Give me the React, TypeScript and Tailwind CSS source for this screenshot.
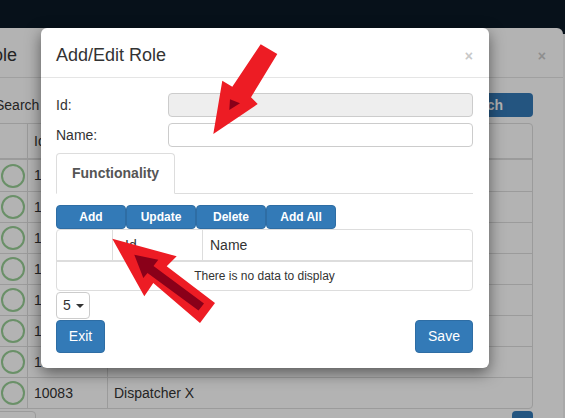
import React from "react";

const bgRows = ["1", "1", "1", "1", "1", "1", "1", "10083"];
const bgNames = ["", "", "", "", "", "", "", "Dispatcher X"];

function BgModal() {
  return (
    <div className="flex h-full pt-[28px]">
      <div className="ml-[-35px] w-[598px] shrink-0 h-full bg-[#b3b3b3] rounded-tr-[6px] flex flex-col text-[#242424]">
        <div className="h-[50px] shrink-0 border-b border-[#a0a0a0] flex items-start justify-between pt-[15px] pl-[15px] pr-[17px]">
          <div className="text-[18px] leading-[25.7px]">Role</div>
          <div className="text-[14px] font-bold leading-none mt-[6px] text-[#8e8e8e]">×</div>
        </div>
        <div className="pl-[15px] pr-[15px] flex flex-col">
          <div className="mt-[15px] flex items-center h-[24px]">
            <div className="ml-[15px] text-[14px]">Search</div>
            <div className="ml-auto mr-[15px] w-[88px] h-[24px] rounded-[4px] bg-[#245580] text-[#b3b3b3] text-[14px] font-bold flex items-center justify-end pr-[30px]">
              Search
            </div>
          </div>
          <div className="mt-[6px] ml-[15px] mr-[15px] border border-[#9b9b9b] rounded-[4px] text-[14px]">
            <div className="h-[36px] flex border-b-2 border-[#9b9b9b]">
              <div className="w-[32px] border-r border-[#9b9b9b]" />
              <div className="w-[80px] border-r border-[#9b9b9b] pl-[6px] flex items-center">Id</div>
              <div className="flex-1 pl-[6px] flex items-center">Name</div>
            </div>
            {bgRows.map((r, i) => (
              <div
                key={i}
                className={
                  i === 0
                    ? "h-[31px] flex"
                    : "h-[31px] flex border-t border-[#9b9b9b]"
                }
              >
                <div className="w-[32px] border-r border-[#9b9b9b] flex items-center pl-[5px]">
                  <div className="w-[24px] h-[24px] rounded-full border-2 border-[#6a9068]" />
                </div>
                <div className="w-[80px] border-r border-[#9b9b9b] pl-[6px] flex items-center">{r}</div>
                <div className="flex-1 pl-[6px] flex items-center">{bgNames[i]}</div>
              </div>
            ))}
          </div>
          <div className="mt-[2px] ml-[15px] mr-[15px] flex">
            <div className="w-[41px] h-[20px] border border-[#9b9b9b] rounded-t-[4px]" />
            <div className="ml-auto w-[21px] h-[20px] bg-[#245580] rounded-t-[4px]" />
          </div>
        </div>
      </div>
      <div className="flex-1 mt-[6px] bg-[#a9a9a9]" />
    </div>
  );
}

function BlueBtn({ children, w, h, size }: { children: React.ReactNode; w: string; h: string; size: string }) {
  return (
    <div
      className={`${w} ${h} ${size} bg-[#337ab7] border border-[#2e6da4] rounded-[4px] text-white flex items-center justify-center`}
    >
      {children}
    </div>
  );
}

function FgModal() {
  return (
    <div className="absolute left-[41px] top-[28px] w-[448px] h-[340px] bg-white rounded-[6px] shadow-[0_5px_15px_rgba(0,0,0,0.5)] text-[#333] flex flex-col">
      <div className="h-[50px] shrink-0 border-b border-[#e5e5e5] flex items-start justify-between pt-[15px] pl-[15px] pr-[16px]">
        <div className="text-[18px] leading-[25.7px]">Add/Edit Role</div>
        <div className="text-[14px] font-bold leading-none mt-[6px] text-[#c8c8c8]">×</div>
      </div>
      <div className="pl-[15px] pr-[16px] flex flex-col">
        <div className="mt-[15px] flex items-center h-[24px]">
          <div className="w-[112px] text-[14px]">Id:</div>
          <div className="flex-1 h-[24px] bg-[#eeeeee] border border-[#cccccc] rounded-[4px]" />
        </div>
        <div className="mt-[6px] flex items-center h-[24px]">
          <div className="w-[112px] text-[14px]">Name:</div>
          <div className="flex-1 h-[24px] bg-white border border-[#cccccc] rounded-[4px]" />
        </div>
        <div className="mt-[6px] flex border-b border-[#dddddd]">
          <div className="h-[41px] -mb-px border border-[#dddddd] border-b-white bg-white rounded-t-[4px] px-[15px] flex items-center font-bold text-[14px] text-[#555]">
            Functionality
          </div>
        </div>
        <div className="mt-[11px] flex">
          <BlueBtn w="w-[70px]" h="h-[24px]" size="text-[12px] font-bold">Add</BlueBtn>
          <BlueBtn w="w-[70px]" h="h-[24px]" size="text-[12px] font-bold">Update</BlueBtn>
          <BlueBtn w="w-[70px]" h="h-[24px]" size="text-[12px] font-bold">Delete</BlueBtn>
          <BlueBtn w="w-[70px]" h="h-[24px]" size="text-[12px] font-bold">Add All</BlueBtn>
        </div>
        <div className="border border-[#dddddd] rounded-[4px]">
          <div className="h-[32px] flex border-b-2 border-[#dddddd] text-[14px]">
            <div className="w-[56px] border-r border-[#dddddd]" />
            <div className="w-[90px] border-r border-[#dddddd] pl-[12px] flex items-center">Id</div>
            <div className="flex-1 pl-[7px] flex items-center">Name</div>
          </div>
          <div className="h-[28px] flex items-center justify-center text-[12px]">There is no data to display</div>
        </div>
        <div className="mt-[1px] w-[34px] h-[27px] border border-[#cccccc] rounded-[4px] flex items-center pl-[6px] text-[14px]">
          5
          <span className="inline-block w-0 h-0 ml-[5px] border-t-[4px] border-x-[4px] border-x-transparent border-t-[#333]" />
        </div>
        <div className="mt-[1px] flex justify-between">
          <BlueBtn w="w-[49px]" h="h-[33px]" size="text-[14px]">Exit</BlueBtn>
          <BlueBtn w="w-[58px]" h="h-[33px]" size="text-[14px]">Save</BlueBtn>
        </div>
      </div>
    </div>
  );
}

function Arrows() {
  return (
    <svg className="absolute left-0 top-0 pointer-events-none" width="565" height="418" viewBox="0 0 565 418">
      <polygon
        points="260.7,44.3 277.3,54 251,97.3 257.7,104 213.3,134 222.3,80.7 232.3,86.7"
        fill="#ed1c24"
      />
      <polygon points="230,99.3 240,103.3 229.3,110" fill="#8a0019" />
      <polygon
        points="112.3,238.7 176.7,256.3 166.7,266.3 215,303 200,323 153.3,283 144.3,296.3"
        fill="#ed1c24"
      />
      <polygon
        points="134.3,254.7 158.3,259.7 153.5,266 204,303.5 198.5,310.5 147.5,273 143.3,278"
        fill="#8a0019"
      />
    </svg>
  );
}

export default function App() {
  return (
    <div className="relative w-[565px] h-[418px] overflow-hidden bg-[#07111a] font-['Liberation_Sans',Arial,sans-serif]">
      <BgModal />
      <FgModal />
      <Arrows />
    </div>
  );
}
